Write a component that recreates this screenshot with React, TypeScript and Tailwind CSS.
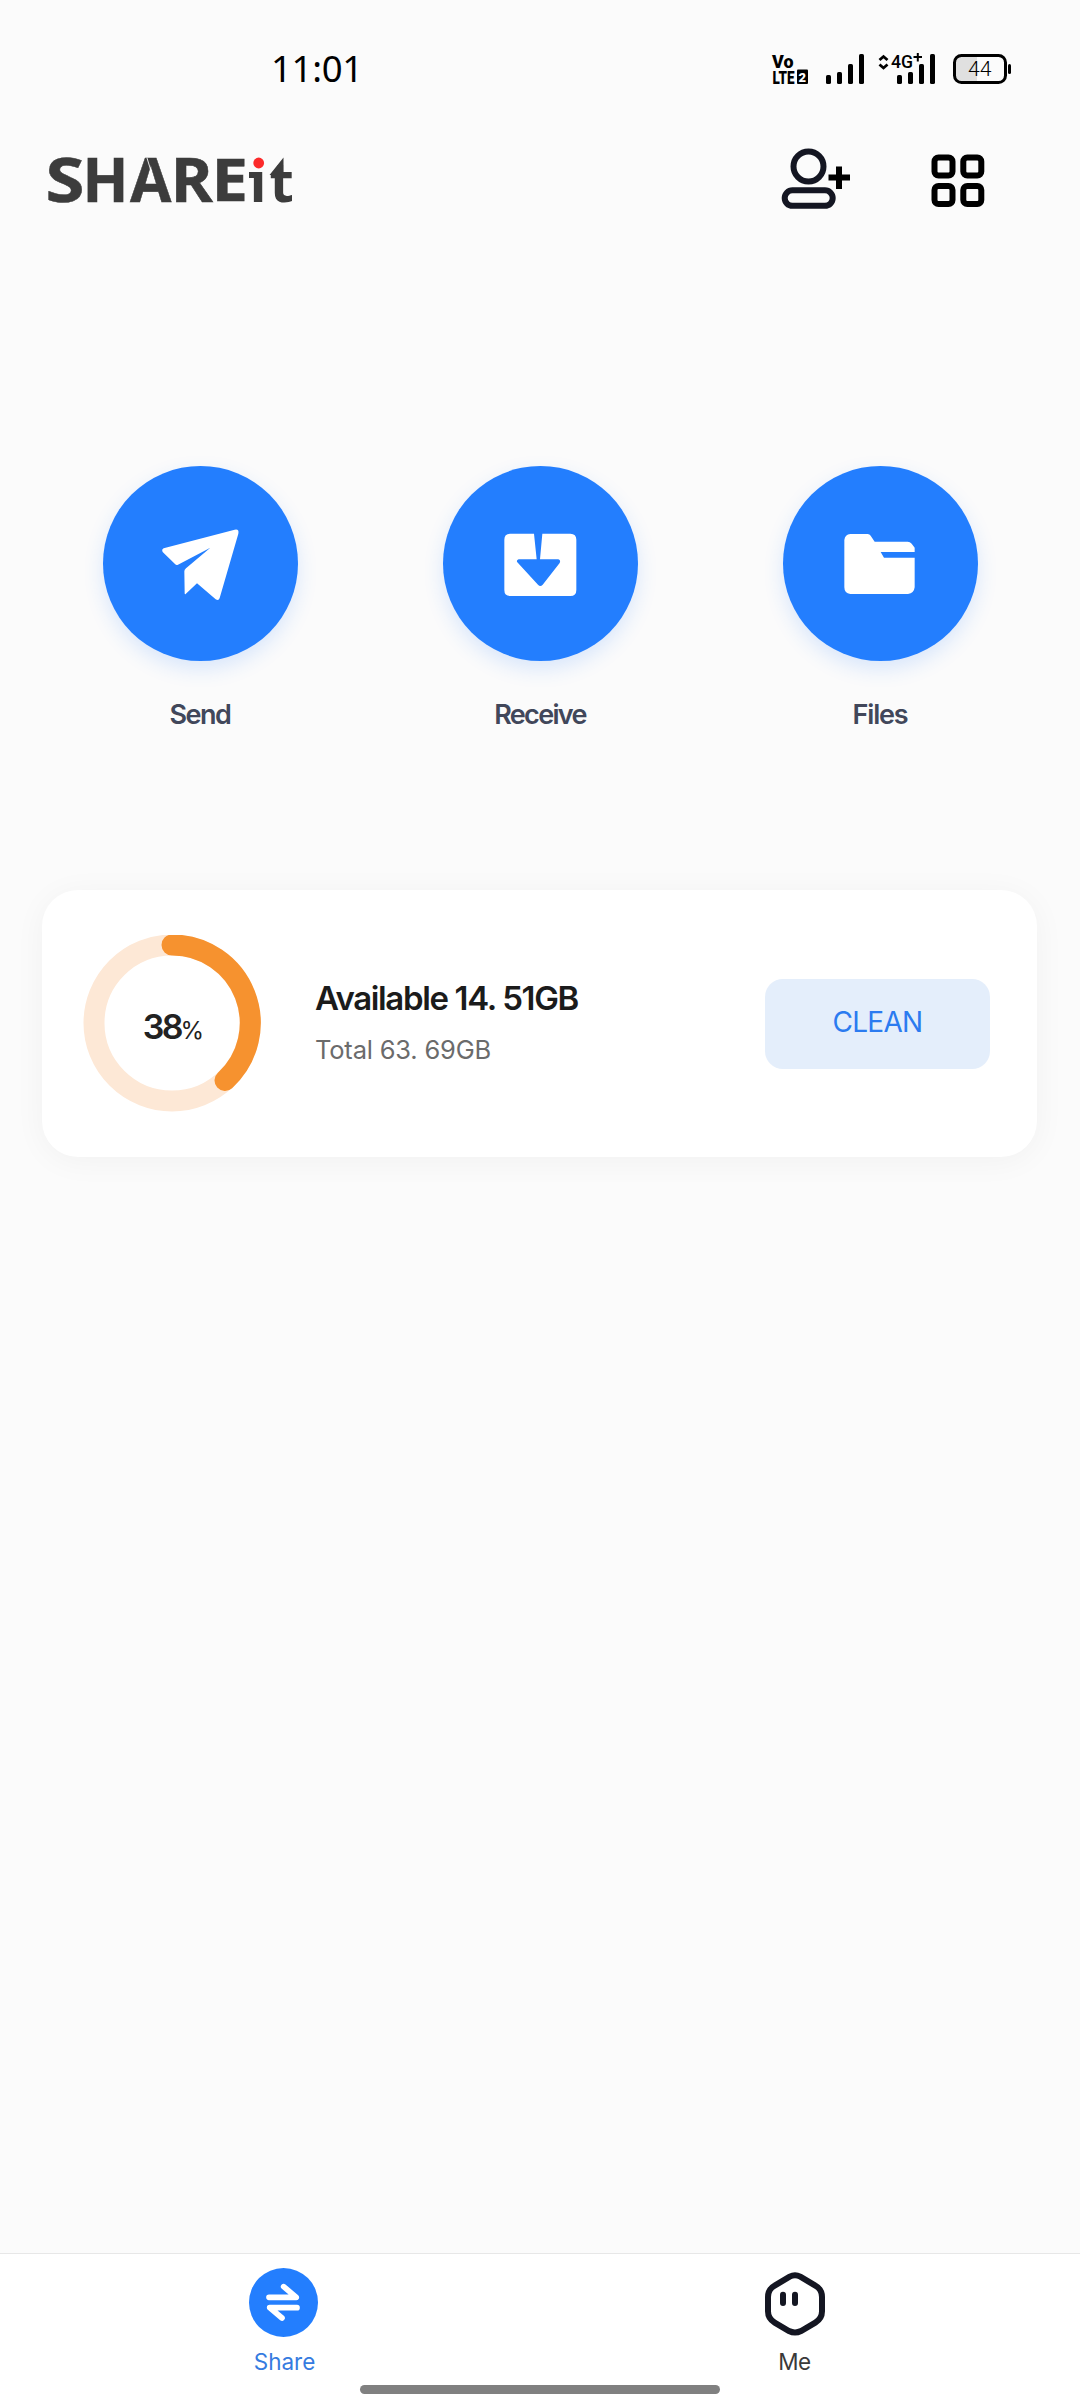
import type { ReactNode } from "react";

const BARS = [
  { x: 0, h: 9 },
  { x: 11, h: 12 },
  { x: 22, h: 20 },
  { x: 33, h: 30 },
];

function SignalBars({ x }: { x: number }) {
  return (
    <g>
      {BARS.map((b) => (
        <rect key={b.x} x={x + b.x} y={84 - b.h} width={5} height={b.h} rx={1.6} />
      ))}
    </g>
  );
}

function StatusIcons() {
  return (
    <svg className="ml-[410px] h-[48px] w-[242px] shrink-0 overflow-visible" viewBox="770 45 242 48" fontFamily="Roboto, sans-serif">
      <text x="772" y="68" fontSize="18" fontWeight="900" textLength="21.5" lengthAdjust="spacingAndGlyphs">Vo</text>
      <text x="772.5" y="84" fontSize="18.500" fontWeight="900" textLength="22" lengthAdjust="spacingAndGlyphs">LTE</text>
      <rect x="797" y="69.500" width="11" height="14.500" rx="1" />
      <text x="798.500" y="81.500" fontSize="13" fontWeight="900" fill="#fff">2</text>
      <SignalBars x={826} />
      <path d="M879.500 60 L883.500 56.500 L887.500 60 M879.500 64.500 L883.500 68 L887.500 64.500" fill="none" stroke="#000" strokeWidth="2.800" />
      <text x="891" y="68" fontSize="19" fontWeight="500" textLength="22" lengthAdjust="spacingAndGlyphs">4G</text>
      <path d="M913.500 57 H922 M917.800 53 V61.500" stroke="#000" strokeWidth="2" />
      <SignalBars x={897} />
      <path d="M954.500 62 a7 7 0 0 1 7-6.500 H977 V82.500 H961.500 a7 7 0 0 1 -7-7 Z" fill="#e0e0e0" />
      <rect x="954.500" y="55.500" width="51" height="27" rx="7" fill="none" stroke="#000" strokeWidth="3" />
      <rect x="1008" y="64" width="3" height="10" rx="1.500" />
      <text x="968" y="76" fontSize="21" fontWeight="300" textLength="23.500" lengthAdjust="spacingAndGlyphs">44</text>
    </svg>
  );
}

function Logo() {
  return (
    <svg className="ml-[42px] h-[96px] w-[260px] shrink-0 overflow-visible" viewBox="42 132 260 96" fontFamily="'Open Sans', sans-serif" fontWeight="700" fill="#3c3c3c">
      <g stroke="#3c3c3c" strokeWidth="0.500">
        <text y="202" fontSize="60" x="45.500" textLength="39" lengthAdjust="spacingAndGlyphs">S</text>
        <text y="202" fontSize="60" x="82.500" textLength="46" lengthAdjust="spacingAndGlyphs">H</text>
        <text y="202" fontSize="60" x="130">A</text>
        <text y="202" fontSize="60" x="170.500" textLength="42.500" lengthAdjust="spacingAndGlyphs">R</text>
        <text y="201" fontSize="59" x="211.500" textLength="36.500" lengthAdjust="spacingAndGlyphs">E</text>
      </g>
      <text y="202" fontSize="56" x="249.500">i</text>
      <text y="202" fontSize="56" x="269.500">t</text>
      <path d="M249 172 h8 v6 h-8 z M269.500 175 L283.500 157.500 V175 Z" />
      <path d="M147 158 L151 171" stroke="#fbfbfb" strokeWidth="0.900" />
      <rect x="251" y="155" width="16" height="15" fill="#fbfbfb" />
      <circle cx="258.700" cy="163" r="5.400" fill="#fc2a2a" />
    </svg>
  );
}

function AddUserIcon() {
  return (
    <svg className="h-[64px] w-[72px]" viewBox="780 146 72 64" fill="none">
      <circle cx="808.500" cy="166.500" r="15" stroke="#141622" strokeWidth="6" />
      <rect x="784.700" y="190.300" width="48" height="15.500" rx="7.750" stroke="#141622" strokeWidth="6" />
      <path d="M828.500 177.500 H850 M839 166.500 V189" stroke="#000" strokeWidth="6" />
    </svg>
  );
}

function GridIcon() {
  return (
    <svg className="h-[54px] w-[54px]" viewBox="0 0 54 54" fill="none" stroke="#000" strokeWidth="6">
      <rect x="3.500" y="3.500" width="18" height="18" rx="4" />
      <rect x="32.300" y="3.500" width="18" height="18" rx="4" />
      <rect x="3.500" y="32" width="18" height="18" rx="4" />
      <rect x="32.300" y="32" width="18" height="18" rx="4" />
    </svg>
  );
}

function Action({ label, className, children }: { label: string; className: string; children: ReactNode }) {
  return (
    <div className="flex w-[340px] flex-col items-center">
      <div className="h-[195px] w-[195px] rounded-full bg-[#237efe] shadow-[0_8px_20px_rgba(35,126,254,0.16)]">
        <svg className="h-full w-full" viewBox="68 48 585 585" fill="#fff">
          {children}
        </svg>
      </div>
      <div className={`mt-[34px] text-[27px] leading-[40px] font-semibold whitespace-nowrap text-[#41475a] ${className}`}>{label}</div>
    </div>
  );
}

export default function App() {
  return (
    <div className="flex h-[2400px] w-[1080px] flex-col overflow-hidden bg-[#fbfbfb] font-['Inter',sans-serif]">
      <div className="flex h-[108px] items-start pt-[45px]">
        <div className="mt-[5px] ml-[271px] w-[89px] font-['Noto_Sans',sans-serif] text-[36.5px] leading-[36px] tracking-[-0.3px] text-black">11:01</div>
        <StatusIcons />
      </div>

      <header className="flex h-[144px] items-center">
        <Logo />
        <div className="ml-[478px] pb-[4px]"><AddUserIcon /></div>
        <div className="ml-[79px] pt-[2px]"><GridIcon /></div>
      </header>

      <section className="mt-[214px] flex justify-center">
        <Action label="Send" className="tracking-[-1.5px]">
          <path d="M250 295 L463 239 Q477 236 474 251 L418 444 Q415 454 406 448 L350 400 L316 432 Q313 434 313 429 L312 364 Q312 359 317 355 L390 293 L293 344 Q288 347 284 342 L247 306 Q243 299 250 295 Z" />
        </Action>
        <Action label="Receive" className="tracking-[-1.7px]">
          <path d="M270 251 H341 L349 328 H295 Q287 330 291 337 L353 404 Q360 412 367 404 L418 339 Q422 330 414 328 H359 L366 251 H450 Q468 251 468 269 V420 Q468 438 450 438 H270 Q252 438 252 420 V269 Q252 251 270 251 Z" />
        </Action>
        <Action label="Files" className="tracking-[-1.2px]">
          <path d="M270 252 H322 Q328 252 331 257 L343 275 H442 Q449 275 454 281 L463 293 V306 H361 L371 323 H463 V412 Q461 430 443 432 H270 Q252 430 252 412 V270 Q254 254 270 252 Z" />
        </Action>
      </section>

      <section className="mt-[155px] ml-[42px] flex h-[267px] w-[995px] items-center rounded-[36px] bg-white shadow-[0_4px_32px_rgba(0,0,0,0.045)]">
        <div className="ml-[41px] grid h-[178px] w-[178px] shrink-0 place-items-center">
          <svg className="col-start-1 row-start-1 h-[178px] w-[178px]" viewBox="0 0 178 178" fill="none" strokeWidth="21">
            <circle cx="89" cy="88" r="78" stroke="#fde8d6" />
            <path d="M89 10 A78 78 0 0 1 142 145.500" stroke="#f6922f" strokeLinecap="round" />
          </svg>
          <div className="col-start-1 row-start-1 flex items-baseline pt-[7px] pl-[2px] leading-none text-[#222]">
            <span className="text-[34px] font-semibold tracking-[-2.8px]">38</span>
            <span className="text-[24px] tracking-[-1px]">%</span>
          </div>
        </div>
        <div className="ml-[54px] w-[450px] whitespace-nowrap">
          <div className="text-[33px] leading-[48px] font-semibold tracking-[-1.35px] text-[#1b1b1b]">Available 14. 51GB</div>
          <div className="mt-[8px] text-[25.5px] leading-[40px] tracking-[-0.2px] text-[#6b6b6b]">Total 63. 69GB</div>
          <div className="h-[3px]" />
        </div>
        <button className="h-[90px] w-[225px] rounded-[18px] bg-[#e4eefb] pb-[4px] text-[28px] tracking-[-0.7px] text-[#2b7bf0]">CLEAN</button>
      </section>

      <nav className="mt-auto flex h-[147px] flex-col border-t border-[#e7e7e7] bg-white">
        <div className="flex h-[131px] whitespace-nowrap">
          <div className="flex w-[567px] flex-col items-center pt-[14px]">
            <svg className="h-[69px] w-[69px]" viewBox="87 84 207 207" fill="none" stroke="#fff" strokeWidth="17" strokeLinecap="round" strokeLinejoin="round">
              <circle cx="190.500" cy="187.500" r="103.500" fill="#237efe" stroke="none" />
              <path d="M147 172 H229 L191 140 M231 203 H149 L186 234" />
            </svg>
            <div className="mt-[8px] pl-[2px] text-[22.5px] leading-[34px] text-[#357be0]">Share</div>
          </div>
          <div className="flex w-[455px] flex-col items-center pt-[18px]">
            <svg className="h-[64px] w-[60px]" viewBox="225 96 180 192" fill="none" stroke="#141622" strokeWidth="18">
              <path d="M299 110 Q315 102 331 110 L376 137 Q396 148 396 171 V214 Q396 236 376 248 L333 273 Q315 282 297 273 L254 248 Q234 236 234 214 V171 Q234 148 254 137 Z" />
              <path d="M279 164 V189 M315 164 V189" strokeLinecap="round" />
            </svg>
            <div className="mt-[9px] text-[22.5px] leading-[34px] tracking-[-0.5px] text-[#3a3a3a]">Me</div>
          </div>
        </div>
        <div className="mx-auto h-[9px] w-[360px] rounded-full bg-[#808080]" />
      </nav>
    </div>
  );
}
